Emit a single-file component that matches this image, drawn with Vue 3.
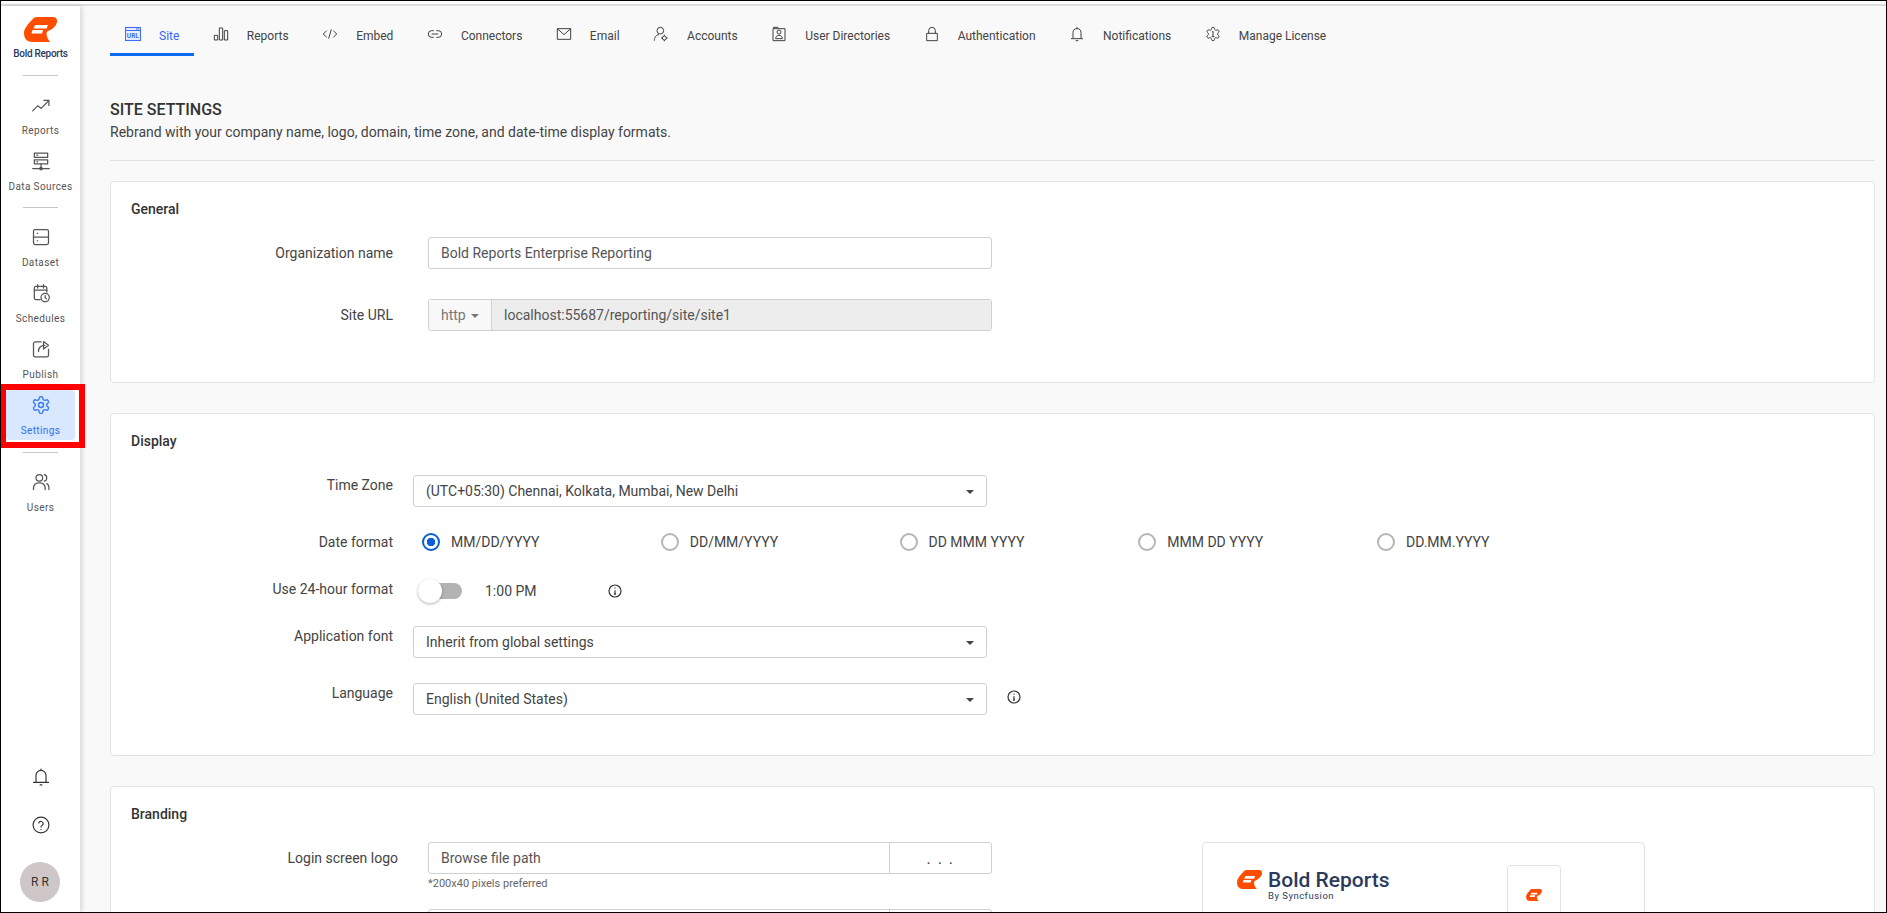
<script setup>
const logoBody = 'M8 3C9 1 11 0 13 0H29C32 0 33.500 2 33 5C32 10 27 13 24 14C22 15 21.500 19 26 25H9C3 25 0 22 0 16C0 12 3 8 8 3Z'
const logoSlot = 'M11 8H24L22.500 11.500H9.500ZM8.500 13H19L18 16.500H7.500Z'
const gear = 'M12.220 2h-.44a2 2 0 0 0-2 2v.18a2 2 0 0 1-1 1.730l-.43.25a2 2 0 0 1-2 0l-.15-.08a2 2 0 0 0-2.730.73l-.22.38a2 2 0 0 0 .73 2.730l.15.1a2 2 0 0 1 1 1.720v.51a2 2 0 0 1-1 1.740l-.15.09a2 2 0 0 0-.73 2.730l.22.38a2 2 0 0 0 2.730.73l.15-.08a2 2 0 0 1 2 0l.43.25a2 2 0 0 1 1 1.730V20a2 2 0 0 0 2 2h.44a2 2 0 0 0 2-2v-.18a2 2 0 0 1 1-1.730l.43-.25a2 2 0 0 1 2 0l.15.08a2 2 0 0 0 2.730-.73l.22-.39a2 2 0 0 0-.73-2.730l-.15-.08a2 2 0 0 1-1-1.740v-.5a2 2 0 0 1 1-1.740l.15-.09a2 2 0 0 0 .73-2.730l-.22-.38a2 2 0 0 0-2.730-.73l-.15.08a2 2 0 0 1-2 0l-.43-.25a2 2 0 0 1-1-1.730V4a2 2 0 0 0-2-2z'

const navGroups = [
  [
    { label: 'Reports', paths: ['M2 19l6-6 4 3 9-9', 'M15.500 6.500H21.500V12.500'] },
    { label: 'Data Sources', paths: ['M4 2.500h16v5H4z', 'M4 10.500h16v5H4z', 'M12 15.500V21', 'M2 21h20', 'M7 5h1', 'M7 13h1', 'M10.500 21a1.500 1.500 0 1 0 3 0a1.500 1.500 0 1 0-3 0'] }
  ],
  [
    { label: 'Dataset', paths: ['M5 3h14a2 2 0 0 1 2 2v14a2 2 0 0 1-2 2H5a2 2 0 0 1-2-2V5a2 2 0 0 1 2-2z', 'M3 12h18', 'M7.500 7.500h.5', 'M7.500 16.500h.5'] },
    { label: 'Schedules', paths: ['M11 20H6a2 2 0 0 1-2-2V6a2 2 0 0 1 2-2h11a2 2 0 0 1 2 2v5', 'M4 8.500h15', 'M8 2v4', 'M15 2v4', 'M12 17.500a5 5 0 1 0 10 0a5 5 0 1 0-10 0', 'M17 15v2.500l1.500 1.500'] },
    { label: 'Publish', paths: ['M12 3.500H5a2 2 0 0 0-2 2v14a2 2 0 0 0 2 2h14a2 2 0 0 0 2-2v-7', 'M9 15c0-5 3-7.500 7.500-7.500', 'M15 3l6 4.500-6 4.500z'] },
    { label: 'Settings', active: true, paths: [gear, 'M9 12a3 3 0 1 0 6 0a3 3 0 1 0-6 0'] }
  ],
  [
    { label: 'Users', paths: ['M3 21v-2a6 6 0 0 1 6-6h2a6 6 0 0 1 6 6v2', 'M6 7a4 4 0 1 0 8 0a4 4 0 1 0-8 0', 'M16 3.200a4 4 0 0 1 0 7.700', 'M19 14c1.500.8 2.500 2.500 2.500 4.500V21'] }
  ]
]

const bellPaths = ['M6 18V10a6 6 0 0 1 12 0v8', 'M3 18.500h18', 'M12 2.500v1.500', 'M11 21.500h2']
const helpPaths = ['M2.500 12a9.500 9.500 0 1 0 19 0a9.500 9.500 0 1 0-19 0', 'M9.300 9.500a2.800 2.800 0 0 1 5.400.9c0 1.900-2.700 2.200-2.700 3.900', 'M12 17.200v.3']

const tabs = [
  { label: 'Reports', paths: ['M2 14h5v7H2z', 'M9.500 3h5v18h-5z', 'M17 7h5v14h-5z'] },
  { label: 'Embed', paths: ['M7 7l-5 5 5 5', 'M17 7l5 5-5 5', 'M14 5l-4 14'] },
  { label: 'Connectors', paths: ['M10 7H7a5 5 0 0 0 0 10h3', 'M14 7h3a5 5 0 0 1 0 10h-3', 'M7 12h10'] },
  { label: 'Email', paths: ['M2 4h20v16H2z', 'M2 4l10 9 10-9'] },
  { label: 'Accounts', paths: ['M6 7a5 5 0 1 0 10 0a5 5 0 1 0-10 0', 'M2 22c0-5 3-9 7-9', 'M14 18a3 3 0 1 0 6 0a3 3 0 1 0-6 0', 'M17 13v2', 'M17 21v2', 'M12 18h2', 'M20 18h2'] },
  { label: 'User Directories', paths: ['M3 4h18v18H3z', 'M3 2h8', 'M9 9a3 3 0 1 0 6 0a3 3 0 1 0-6 0', 'M7 19c0-3 2-5 5-5s5 2 5 5z'] },
  { label: 'Authentication', paths: ['M4 11h16v11H4z', 'M7 11V7a5 5 0 0 1 10 0v4'] },
  { label: 'Notifications', paths: ['M6 18V10a6 6 0 0 1 12 0v8', 'M3 19h18', 'M12 1.500v2.500', 'M10 22h4'] },
  { label: 'Manage License', paths: [gear, 'M12 8v8', 'M10.500 9.200L12 8', 'M10 16h4'] }
]

const dateFormats = ['MM/DD/YYYY', 'DD/MM/YYYY', 'DD MMM YYYY', 'MMM DD YYYY', 'DD.MM.YYYY']
</script>

<template>
  <div class="app">
    <div class="strip"></div>
    <div class="body">
      <aside class="sidebar">
        <div class="brand">
          <svg class="brand-logo" viewBox="0 0 33 25">
            <path :d="logoBody" fill="#ff4d00" />
            <path :d="logoSlot" fill="#fff" />
          </svg>
          <span class="brand-name">Bold Reports</span>
        </div>
        <nav v-for="(group, i) in navGroups" :key="i" class="nav-group">
          <a v-for="item in group" :key="item.label" class="nav-item" :class="{ active: item.active }">
            <svg class="nav-icon" viewBox="0 0 24 24">
              <path v-for="d in item.paths" :key="d" :d="d" />
            </svg>
            <span>{{ item.label }}</span>
          </a>
        </nav>
        <div class="side-bottom">
          <svg class="side-icon" viewBox="0 0 24 24"><path v-for="d in bellPaths" :key="d" :d="d" /></svg>
          <svg class="side-icon" viewBox="0 0 24 24"><path v-for="d in helpPaths" :key="d" :d="d" /></svg>
          <div class="avatar">R R</div>
        </div>
        <div class="callout"></div>
      </aside>

      <main class="main">
        <div class="tabs">
          <a class="tab active">
            <svg class="tab-icon" viewBox="0 0 16 14">
              <rect x="0.500" y="0.500" width="15" height="13" />
              <path d="M.5 3.500h15M11 2h3" />
              <text x="8" y="11" text-anchor="middle" class="url-text">URL</text>
            </svg>
            <span>Site</span>
          </a>
          <a v-for="tab in tabs" :key="tab.label" class="tab">
            <svg class="tab-icon" viewBox="0 0 24 24">
              <path v-for="d in tab.paths" :key="d" :d="d" />
            </svg>
            <span>{{ tab.label }}</span>
          </a>
        </div>

        <header class="page-head">
          <h1>SITE SETTINGS</h1>
          <p>Rebrand with your company name, logo, domain, time zone, and date-time display formats.</p>
        </header>

        <section class="card card-general">
          <h2>General</h2>
          <div class="row wide">
            <label>Organization name</label>
            <div class="input">Bold Reports Enterprise Reporting</div>
          </div>
          <div class="row wide site-row">
            <label>Site URL</label>
            <div class="url-group">
              <div class="url-scheme">http <i class="caret small"></i></div>
              <div class="url-value">localhost:55687/reporting/site/site1</div>
            </div>
          </div>
        </section>

        <section class="card card-display">
          <h2>Display</h2>
          <div class="row narrow top">
            <label>Time Zone</label>
            <div class="select">(UTC+05:30) Chennai, Kolkata, Mumbai, New Delhi<i class="caret"></i></div>
          </div>
          <div class="row narrow date-row">
            <label>Date format</label>
            <div class="radios">
              <div v-for="(fmt, i) in dateFormats" :key="fmt" class="radio-item">
                <span class="radio" :class="{ checked: i === 0 }"></span>
                <span>{{ fmt }}</span>
              </div>
            </div>
          </div>
          <div class="row narrow time-row">
            <label>Use 24-hour format</label>
            <div class="toggle"><span class="knob"></span></div>
            <span class="time-text">1:00 PM</span>
            <svg class="info time-info" viewBox="0 0 14 14"><circle cx="7" cy="7" r="6" /><path d="M7 6.200v4M6 10.200h2M7 3.600v1" /></svg>
          </div>
          <div class="row narrow top font-row">
            <label>Application font</label>
            <div class="select">Inherit from global settings<i class="caret"></i></div>
          </div>
          <div class="row narrow top lang-row">
            <label>Language</label>
            <div class="select">English (United States)<i class="caret"></i></div>
            <svg class="info lang-info" viewBox="0 0 14 14"><circle cx="7" cy="7" r="6" /><path d="M7 6.200v4M6 10.200h2M7 3.600v1" /></svg>
          </div>
        </section>

        <section class="card card-branding">
          <h2>Branding</h2>
          <div class="branding-body">
            <div class="branding-fields">
              <div class="row logo-row">
                <label>Login screen logo</label>
                <div class="file-group">
                  <div class="file-path">Browse file path</div>
                  <div class="file-btn">. . .</div>
                </div>
              </div>
              <p class="hint">*200x40 pixels preferred</p>
              <div class="row logo-row">
                <label></label>
                <div class="file-group">
                  <div class="file-path"></div>
                  <div class="file-btn"></div>
                </div>
              </div>
            </div>
            <div class="preview">
              <div class="preview-logo">
                <svg class="preview-mark" viewBox="0 0 33 25">
                  <path :d="logoBody" fill="#ff4d00" />
                  <path :d="logoSlot" fill="#fff" />
                </svg>
                <div class="preview-text">
                  <strong>Bold Reports</strong>
                  <span>By Syncfusion</span>
                </div>
              </div>
              <div class="preview-tile">
                <svg class="tile-mark" viewBox="0 0 33 25">
                  <path :d="logoBody" fill="#ff4d00" />
                  <path :d="logoSlot" fill="#fff" />
                </svg>
              </div>
            </div>
          </div>
        </section>
      </main>
    </div>
  </div>
</template>

<style>
html, body {
  margin: 0;
  overflow: hidden;
}
</style>

<style scoped>
.app {
  display: flex;
  flex-direction: column;
  height: 100vh;
  box-sizing: border-box;
  border: 1px solid #000;
  background: #f9f9f9;
  font-family: Roboto, "Liberation Sans", sans-serif;
  font-size: 14px;
  color: #333;
  overflow: hidden;
}

.strip {
  flex: 0 0 5px;
  box-sizing: border-box;
  background: #fff;
  border-bottom: 2px solid #dedede;
}

.body {
  flex: 1;
  min-height: 0;
  display: flex;
}

/* sidebar */
.sidebar {
  position: relative;
  z-index: 1;
  flex: 0 0 79px;
  display: flex;
  flex-direction: column;
  align-items: center;
  background: #fff;
  box-shadow: 2px 0 5px rgba(0, 0, 0, 0.14);
}

.brand {
  display: flex;
  flex-direction: column;
  align-items: center;
  width: 100%;
  height: 69px;
  padding-top: 11px;
  box-sizing: border-box;
}

.brand-logo {
  width: 33px;
  height: 25px;
}

.brand-name {
  margin-top: 6px;
  font-size: 10px;
  line-height: 12px;
  font-weight: 500;
  letter-spacing: -0.3px;
  color: #2b3a5c;
}

.nav-group {
  position: relative;
  display: flex;
  flex-direction: column;
  align-items: center;
  width: 100%;
  padding-top: 15px;
}

.nav-group::before {
  content: "";
  position: absolute;
  top: 0;
  left: 22px;
  width: 35px;
  border-top: 1px solid #c8c8c8;
}

.nav-group + .nav-group {
  margin-top: 5px;
}

.nav-group:last-of-type {
  margin-top: 6px;
}

.nav-item {
  display: flex;
  flex-direction: column;
  align-items: center;
  width: 69px;
  height: 50px;
  padding-top: 5px;
  margin-bottom: 6px;
  box-sizing: border-box;
  border-radius: 4px;
  font-size: 10px;
  line-height: 12px;
  letter-spacing: 0.4px;
  color: #555;
  white-space: nowrap;
}

.nav-item.active {
  background: #d9e8ff;
  color: #2f6ff0;
}

.nav-icon {
  width: 20px;
  height: 20px;
  margin-bottom: 10px;
  flex: none;
  fill: none;
  stroke: #555;
  stroke-width: 1.500;
  stroke-linecap: round;
  stroke-linejoin: round;
}

.nav-item.active .nav-icon {
  stroke: #3b7cf2;
  stroke-width: 1.700;
}

.side-bottom {
  margin-top: auto;
  display: flex;
  flex-direction: column;
  align-items: center;
  gap: 28px;
  padding-bottom: 10px;
}

.side-icon {
  width: 20px;
  height: 20px;
  fill: none;
  stroke: #333;
  stroke-width: 1.400;
  stroke-linecap: round;
}

.avatar {
  display: flex;
  align-items: center;
  justify-content: center;
  width: 40px;
  height: 40px;
  margin: -1px 0 0 -1px;
  border-radius: 50%;
  background: #cfc7c7;
  font-size: 12px;
  color: #333;
}

/* red highlight drawn over the screenshot */
.callout {
  position: absolute;
  left: -1px;
  top: 378px;
  width: 85px;
  height: 64px;
  box-sizing: border-box;
  border: 6px solid #f00;
  pointer-events: none;
}

/* main column */
.main {
  flex: 1;
  min-width: 0;
  padding: 0 11px 0 30px;
}

.tabs {
  display: flex;
  gap: 3.500px;
  height: 50px;
}

.tab {
  display: flex;
  align-items: center;
  gap: 18px;
  height: 50px;
  box-sizing: border-box;
  padding: 8px 15px 0;
  border-bottom: 3px solid transparent;
  font-size: 12px;
  color: #444;
  white-space: nowrap;
}

.tab span {
  padding-top: 5px;
}

.tab.active {
  border-bottom-color: #0a6cf5;
  color: #3366ff;
}

.tab-icon {
  width: 16px;
  height: 16px;
  fill: none;
  stroke: #333;
  stroke-width: 1.400;
}

.tab.active .tab-icon {
  stroke: #3d6cf5;
  stroke-width: 1.100;
  fill: #e8efff;
}

.url-text {
  font-size: 6.500px;
  font-weight: 700;
  font-family: Roboto, sans-serif;
  letter-spacing: 0.200px;
  fill: #3d6cf5;
  stroke: none;
}

.page-head {
  padding-top: 44px;
  height: 105px;
  box-sizing: border-box;
  border-bottom: 1px solid #e2e2e2;
}

.page-head h1 {
  margin: 0;
  font-size: 16px;
  line-height: 20px;
  font-weight: 500;
  color: #333;
}

.page-head p {
  margin: 2px 0 0;
  font-size: 14px;
  line-height: 20px;
  color: #444;
}

.card {
  margin-top: 20px;
  padding: 17px 20px 0 0;
  box-sizing: border-box;
  background: #fff;
  border: 1px solid #e3e3e3;
  border-radius: 4px;
}

.card + .card {
  margin-top: 30px;
}

.card-general {
  height: 202px;
}

.card-display {
  height: 343px;
}

.card-branding {
  height: 200px;
}

.card h2 {
  margin: 0 0 0 20px;
  font-size: 14px;
  line-height: 20px;
  font-weight: 500;
  color: #333;
}

/* form rows */
.row {
  display: flex;
  align-items: center;
  min-height: 32px;
}

.row > label {
  flex: 0 0 282px;
  text-align: right;
  font-size: 14px;
  line-height: 20px;
  color: #444;
}

.row.wide {
  margin-top: 18px;
}

.row.wide > .input,
.row.wide > .url-group {
  margin-left: 35px;
}

.site-row.wide {
  margin-top: 30px;
}

.row.narrow > .select {
  margin-left: 20px;
}

.row.narrow > .radios {
  margin-left: 21px;
}

.row.top {
  align-items: flex-start;
  margin-top: 24px;
}

.date-row {
  margin-top: 19px;
}

.time-row {
  margin-top: 17px;
}

.time-row > label {
  margin-top: -4px;
}

.row.font-row {
  margin-top: 19px;
}

.row.lang-row {
  margin-top: 25px;
}

.input,
.select,
.file-group,
.url-group {
  box-sizing: border-box;
  height: 32px;
  border: 1px solid #d0d0d0;
  border-radius: 3px;
  background: #fff;
}

.input {
  width: 564px;
  padding: 0 12px;
  line-height: 30px;
  color: #555;
}

.select {
  position: relative;
  width: 574px;
  padding: 0 12px;
  line-height: 31px;
  color: #444;
}

.caret {
  position: absolute;
  right: 12px;
  top: 14px;
  border: 4px solid transparent;
  border-top-color: #444;
  border-bottom-width: 0;
}

.caret.small {
  position: static;
  display: inline-block;
  margin-left: 2px;
  vertical-align: middle;
  border-top-color: #777;
}

.url-group {
  display: flex;
  width: 564px;
  overflow: hidden;
}

.url-scheme {
  flex: 0 0 63px;
  box-sizing: border-box;
  padding-left: 12px;
  line-height: 30px;
  background: #f8f8f8;
  border-right: 1px solid #d0d0d0;
  color: #777;
}

.url-value {
  flex: 1;
  padding-left: 12px;
  line-height: 30px;
  background: #ededed;
  color: #555;
}

.radios {
  display: flex;
}

.radio-item {
  display: flex;
  align-items: center;
  gap: 11px;
  width: 238.750px;
  padding-left: 8px;
  box-sizing: border-box;
  color: #444;
}

.radio {
  box-sizing: border-box;
  width: 18px;
  height: 18px;
  border: 2px solid #b5b5b5;
  border-radius: 50%;
}

.radio.checked {
  border-color: #0a5fd8;
  background: radial-gradient(circle, #0a5fd8 0 4px, #fff 4.500px);
}

.toggle {
  position: relative;
  width: 44px;
  height: 16px;
  margin-left: 25px;
  border-radius: 8px;
  background: #b3b3b3;
}

.knob {
  position: absolute;
  left: 0;
  top: -4px;
  width: 24px;
  height: 24px;
  border-radius: 50%;
  background: #fff;
  box-shadow: 0 1px 3px rgba(0, 0, 0, 0.3);
}

.time-text {
  margin-left: 23px;
  color: #444;
}

.info {
  width: 14px;
  height: 14px;
  fill: none;
  stroke: #333;
  stroke-width: 1.200;
}

.time-info {
  margin-left: 71px;
}

.lang-info {
  margin: 7px 0 0 20px;
}

.file-group {
  display: flex;
  width: 564px;
}

.file-path {
  flex: 1;
  padding: 0 12px;
  line-height: 30px;
  color: #555;
}

.file-btn {
  flex: 0 0 101px;
  text-align: center;
  line-height: 32px;
  font-size: 16px;
  letter-spacing: 1.500px;
  border-left: 1px solid #d0d0d0;
  color: #444;
}

.branding-body {
  display: flex;
}

.branding-fields {
  flex: 0 0 992px;
}

.logo-row {
  margin-top: 18px;
}

.logo-row > label {
  flex-basis: 287px;
}

.logo-row > .file-group {
  margin-left: 30px;
}

.hint {
  margin: 4px 0 -16px 317px;
  font-size: 11px;
  line-height: 12px;
  color: #666;
}

.hint + .logo-row {
  margin-top: 35px;
}

.preview {
  display: flex;
  justify-content: space-between;
  box-sizing: border-box;
  width: 443px;
  height: 120px;
  margin: 18px 0 0 99px;
  padding: 22px 83px 0 34px;
  border: 1px solid #e2e2e2;
  border-radius: 4px;
}

.preview-logo {
  display: flex;
  gap: 6px;
  height: 40px;
  padding-top: 3px;
}

.preview-mark {
  width: 25px;
  height: 19px;
  margin-top: 2px;
}

.preview-text {
  display: flex;
  flex-direction: column;
}

.preview-text strong {
  font-size: 21px;
  line-height: 24px;
  font-weight: 500;
  color: #2b3a5c;
}

.preview-text span {
  margin-top: -2px;
  font-size: 9.500px;
  line-height: 12px;
  letter-spacing: 0.500px;
  color: #2b3a5c;
}

.preview-tile {
  display: flex;
  justify-content: center;
  box-sizing: border-box;
  width: 54px;
  height: 54px;
  padding-top: 23px;
  border: 1px solid #e2e2e2;
  border-radius: 4px;
}

.tile-mark {
  width: 16px;
  height: 12px;
}
</style>
